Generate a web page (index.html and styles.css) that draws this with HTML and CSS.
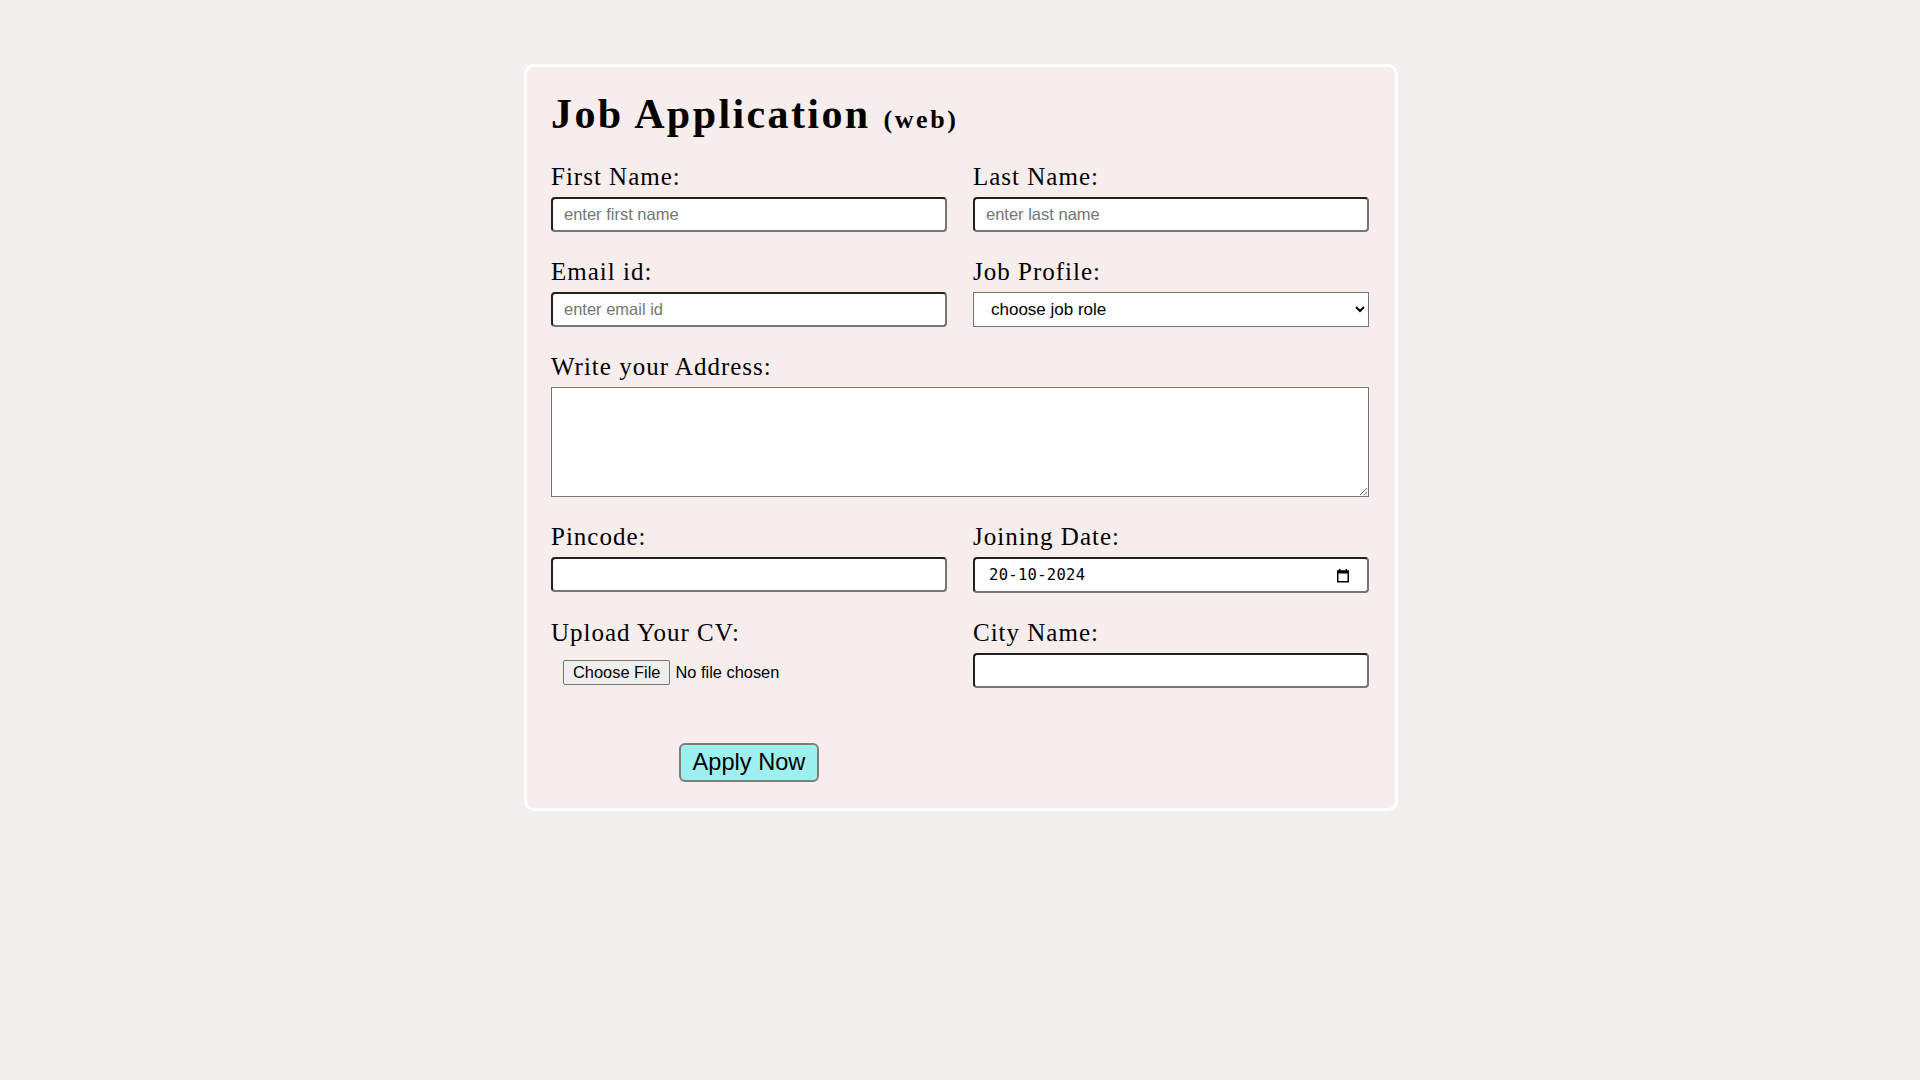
FILE: index.html
```html
<!DOCTYPE html>
<html lang="en">
<head>
<meta charset="utf-8">
<title>Job Application</title>
<link rel="stylesheet" href="styles.css">
</head>
<body>
<div class="card">
  <h1 class="title">Job Application <span class="sub">(web)</span></h1>
  <form class="form">
    <div class="field">
      <label class="label">First Name:</label>
      <input class="text-input" type="text" placeholder="enter first name">
    </div>
    <div class="field">
      <label class="label">Last Name:</label>
      <input class="text-input" type="text" placeholder="enter last name">
    </div>
    <div class="field">
      <label class="label">Email id:</label>
      <input class="text-input" type="text" placeholder="enter email id">
    </div>
    <div class="field">
      <label class="label">Job Profile:</label>
      <select class="select">
        <option>choose job role</option>
        <option>Frontend Developer</option>
        <option>Backend Developer</option>
      </select>
    </div>
    <div class="field full">
      <label class="label">Write your Address:</label>
      <textarea class="textarea"></textarea>
    </div>
    <div class="field">
      <label class="label">Pincode:</label>
      <input class="text-input" type="text">
    </div>
    <div class="field">
      <label class="label">Joining Date:</label>
      <div class="date-input">
        <span class="date-value">20-10-2024</span>
        <svg class="cal-icon" width="14" height="15" viewBox="0 0 14 15">
          <rect x="1.75" y="3.25" width="10.5" height="10.5" fill="none" stroke="#000" stroke-width="1.5"/>
          <rect x="1" y="2.5" width="12" height="3" fill="#000"/>
          <rect x="3" y="1" width="1.5" height="2" fill="#000"/>
          <rect x="9.5" y="1" width="1.5" height="2" fill="#000"/>
        </svg>
      </div>
    </div>
    <div class="field">
      <label class="label">Upload Your CV:</label>
      <input class="file" type="file">
    </div>
    <div class="field">
      <label class="label">City Name:</label>
      <input class="text-input" type="text">
    </div>
    <div class="actions">
      <button class="apply" type="button">Apply Now</button>
    </div>
  </form>
</div>
</body>
</html>
```
FILE: styles.css
```css
html, body {
  margin: 0;
  padding: 0;
}

body {
  background: #f1f0ef;
  font-family: "Liberation Serif", serif;
  color: #000;
}

.card {
  box-sizing: border-box;
  width: 874px;
  margin: 64px 0 0 calc(50% - 436px);
  background: #f7eded;
  border: 3px solid #ffffff;
  border-radius: 10px;
  padding: 23px 26px 26px 24px;
}

.title {
  margin: 0;
  font-size: 42px;
  line-height: 48px;
  font-weight: bold;
  letter-spacing: 2.4px;
}

.sub {
  font-size: 26px;
  line-height: 1;
  letter-spacing: 2.6px;
}

.form {
  margin-top: 25px;
  display: grid;
  grid-template-columns: 396px 396px;
  column-gap: 26px;
  row-gap: 26px;
}

.field.full {
  grid-column: 1 / span 2;
}

.label {
  display: block;
  font-size: 25px;
  line-height: 28px;
  letter-spacing: 1px;
  margin-bottom: 6px;
}

.text-input {
  display: block;
  box-sizing: border-box;
  width: 100%;
  height: 35px;
  margin: 0;
  padding: 0 11px;
  border: 2px inset rgb(118, 118, 118);
  border-radius: 4px;
  background: #fff;
  font-family: "Liberation Sans", Arial, sans-serif;
  font-size: 16.5px;
  color: #000;
}

.text-input::placeholder {
  color: #757575;
}

.select {
  display: block;
  box-sizing: border-box;
  width: 100%;
  height: 35px;
  margin: 0;
  padding: 0 10px 0 13px;
  font-family: "Liberation Sans", Arial, sans-serif;
  font-size: 17px;
  color: #000;
  background: #fff;
}

.textarea {
  display: block;
  box-sizing: border-box;
  width: 100%;
  height: 110px;
  margin: 0;
  background: #fff;
}

.date-input {
  box-sizing: border-box;
  height: 36px;
  display: flex;
  align-items: center;
  justify-content: space-between;
  padding: 0 17px 0 14px;
  border: 2px inset rgb(118, 118, 118);
  border-radius: 4px;
  background: #fff;
}

.date-value {
  font-family: "DejaVu Sans Mono", monospace;
  font-size: 15.5px;
  letter-spacing: 0.3px;
  color: #000;
}

.cal-icon {
  display: block;
}

.file {
  display: block;
  margin: 13px 0 0 12px;
  font-family: "Liberation Sans", Arial, sans-serif;
  font-size: 16.4px;
  color: #000;
}

.file::file-selector-button {
  height: 25px;
  padding: 0 9px;
  margin-right: 5px;
  border: 1px solid #767676;
  border-radius: 2px;
  background: #efefef;
  font-family: "Liberation Sans", Arial, sans-serif;
  font-size: 16.4px;
  color: #000;
}

.actions {
  grid-column: 1;
  display: flex;
  justify-content: center;
  margin-top: 29px;
}

.apply {
  box-sizing: border-box;
  height: 39px;
  padding: 0 12px;
  border: 2px solid #7d7d7d;
  border-radius: 6px;
  background: #9df0f0;
  font-family: "Liberation Sans", Arial, sans-serif;
  font-size: 23.6px;
  color: #000;
}
```
